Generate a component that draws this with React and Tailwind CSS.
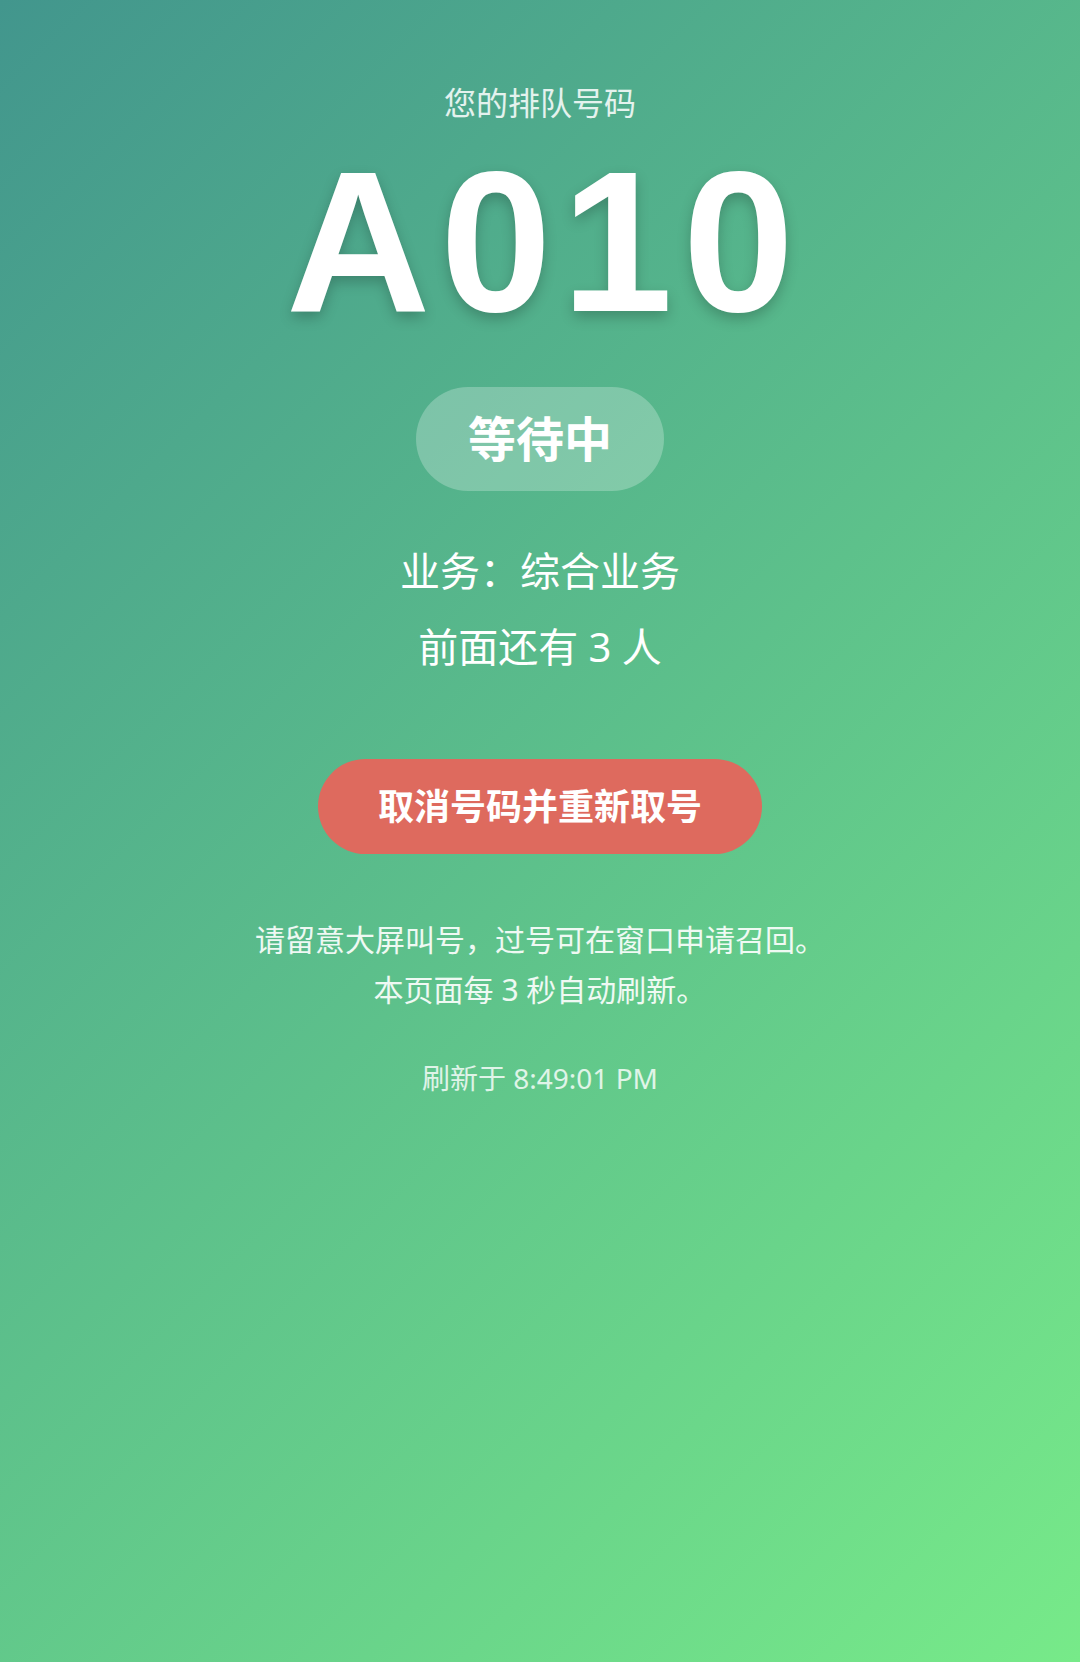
const QueueTicket = () => {
  const ticket = { number: "A010", status: "等待中", service: "综合业务", ahead: 3, refreshedAt: "8:49:01 PM" };

  return (
    <div
      className="min-h-[1662px] w-full bg-[linear-gradient(135deg,#42968d_0%,#77ea89_100%)] text-white flex flex-col items-center pt-[79px]"
      style={{ fontFamily: '"Noto Sans", "Noto Sans CJK SC", sans-serif' }}
    >
      <p className="text-[32px] leading-[48px] text-white/85">您的排队号码</p>

      <h1
        className="mt-[15px] text-[200px] leading-none font-bold tracking-[10px] pl-[10px] [text-shadow:0_6px_14px_rgba(0,0,0,0.22)]"
        style={{ fontFamily: '"Liberation Sans", Arial, sans-serif' }}
      >
        {ticket.number}
      </h1>

      <div className="mt-[45px] rounded-full bg-white/25 px-[52px] py-[16px] text-[48px] leading-[72px] font-bold">
        {ticket.status}
      </div>

      <p className="mt-[50px] text-[40px] leading-[60px]">业务：{ticket.service}</p>
      <p className="mt-[16px] text-[40px] leading-[60px]">前面还有 {ticket.ahead} 人</p>

      <button className="mt-[82px] rounded-full bg-[#de6a5e] px-[60px] py-[20px] text-[36px] leading-[55px] font-bold text-white">
        取消号码并重新取号
      </button>

      <div className="mt-[61px] text-center text-[30px] leading-[50px] text-white/90">
        <p>请留意大屏叫号，过号可在窗口申请召回。</p>
        <p>本页面每 3 秒自动刷新。</p>
      </div>

      <p className="mt-[42px] text-[28px] leading-[42px] text-white/80">刷新于 {ticket.refreshedAt}</p>
    </div>
  );
};

export default function App() {
  return <QueueTicket />;
}
